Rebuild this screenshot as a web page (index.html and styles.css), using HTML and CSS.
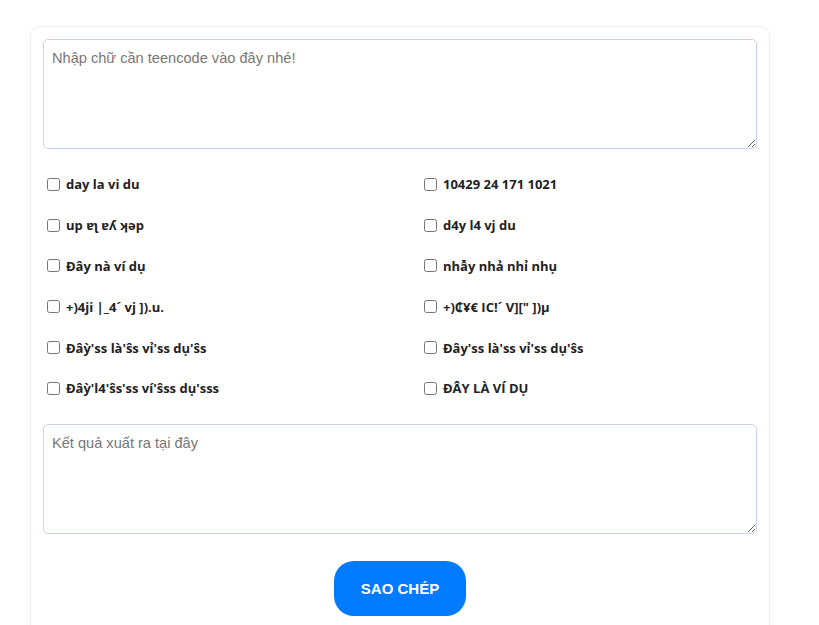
FILE: index.html
```html
<!DOCTYPE html>
<html lang="vi">
<head>
<meta charset="utf-8">
<title>Teencode</title>
<link rel="stylesheet" href="styles.css">
</head>
<body>
<div class="card">
  <textarea class="box" placeholder="Nhập chữ cần teencode vào đây nhé!"></textarea>
  <div class="options">
    <label class="opt"><input type="checkbox"><span>day la vi du</span></label>
    <label class="opt"><input type="checkbox"><span>10429 24 171 1021</span></label>
    <label class="opt"><input type="checkbox"><span>up ɐʅ ɐʎ ʞəp</span></label>
    <label class="opt"><input type="checkbox"><span>d4y l4 vj du</span></label>
    <label class="opt"><input type="checkbox"><span>Đây nà ví dụ</span></label>
    <label class="opt"><input type="checkbox"><span>nhẫy nhả nhỉ nhụ</span></label>
    <label class="opt"><input type="checkbox"><span>+)4ji |_4´ vj ]).u.</span></label>
    <label class="opt"><input type="checkbox"><span>+)₵¥€ IC!´ V][" ])µ</span></label>
    <label class="opt"><input type="checkbox"><span>Đâỳ'ss là'ŝs vỉ'ss dụ'ŝs</span></label>
    <label class="opt"><input type="checkbox"><span>Đây'ss là'ss vỉ'ss dụ'ŝs</span></label>
    <label class="opt"><input type="checkbox"><span>Đâỳ'l4'ŝs'ss ví'ŝss dụ'sss</span></label>
    <label class="opt"><input type="checkbox"><span>ĐÂY LÀ VÍ DỤ</span></label>
  </div>
  <textarea class="box" placeholder="Kết quả xuất ra tại đây"></textarea>
  <div class="actions">
    <button class="copy" type="button">SAO CHÉP</button>
  </div>
</div>
</body>
</html>
```

FILE: styles.css
```css
html, body {
  margin: 0;
  padding: 0;
  background: #ffffff;
}
body {
  font-family: "Open Sans", "Noto Sans", sans-serif;
  color: #212529;
}
.card {
  margin: 26px 0 0 30px;
  width: 740px;
  box-sizing: border-box;
  border: 1px solid #eeeeee;
  border-radius: 10px;
  padding: 12px 12px 24px 12px;
  display: flex;
  flex-direction: column;
}
.box {
  display: block;
  box-sizing: border-box;
  width: 714px;
  height: 110px;
  border: 1px solid #c8d2ea;
  border-radius: 5px;
  padding: 10px 8px 8px 8px;
  font-family: "Liberation Sans", Arial, sans-serif;
  font-size: 14.6px;
  color: #333;
  outline: none;
  margin: 0;
}
.box::placeholder {
  color: #777777;
}
.options {
  display: grid;
  grid-template-columns: 377px 1fr;
  grid-auto-rows: 40.8px;
  padding: 15px 0 15px 0;
}
.opt {
  display: flex;
  align-items: center;
  font-size: 13px;
  font-weight: 700;
  color: #222;
}
.opt input {
  width: 13px;
  height: 13px;
  margin: 0 6px 0 4px;
}
.actions {
  display: flex;
  justify-content: center;
  padding-top: 27px;
}
.copy {
  width: 132px;
  height: 55px;
  border: none;
  border-radius: 20px;
  background: #007bff;
  color: #ffffff;
  font-family: "Liberation Sans", Arial, sans-serif;
  font-weight: 700;
  font-size: 15px;
  cursor: pointer;
}
```
